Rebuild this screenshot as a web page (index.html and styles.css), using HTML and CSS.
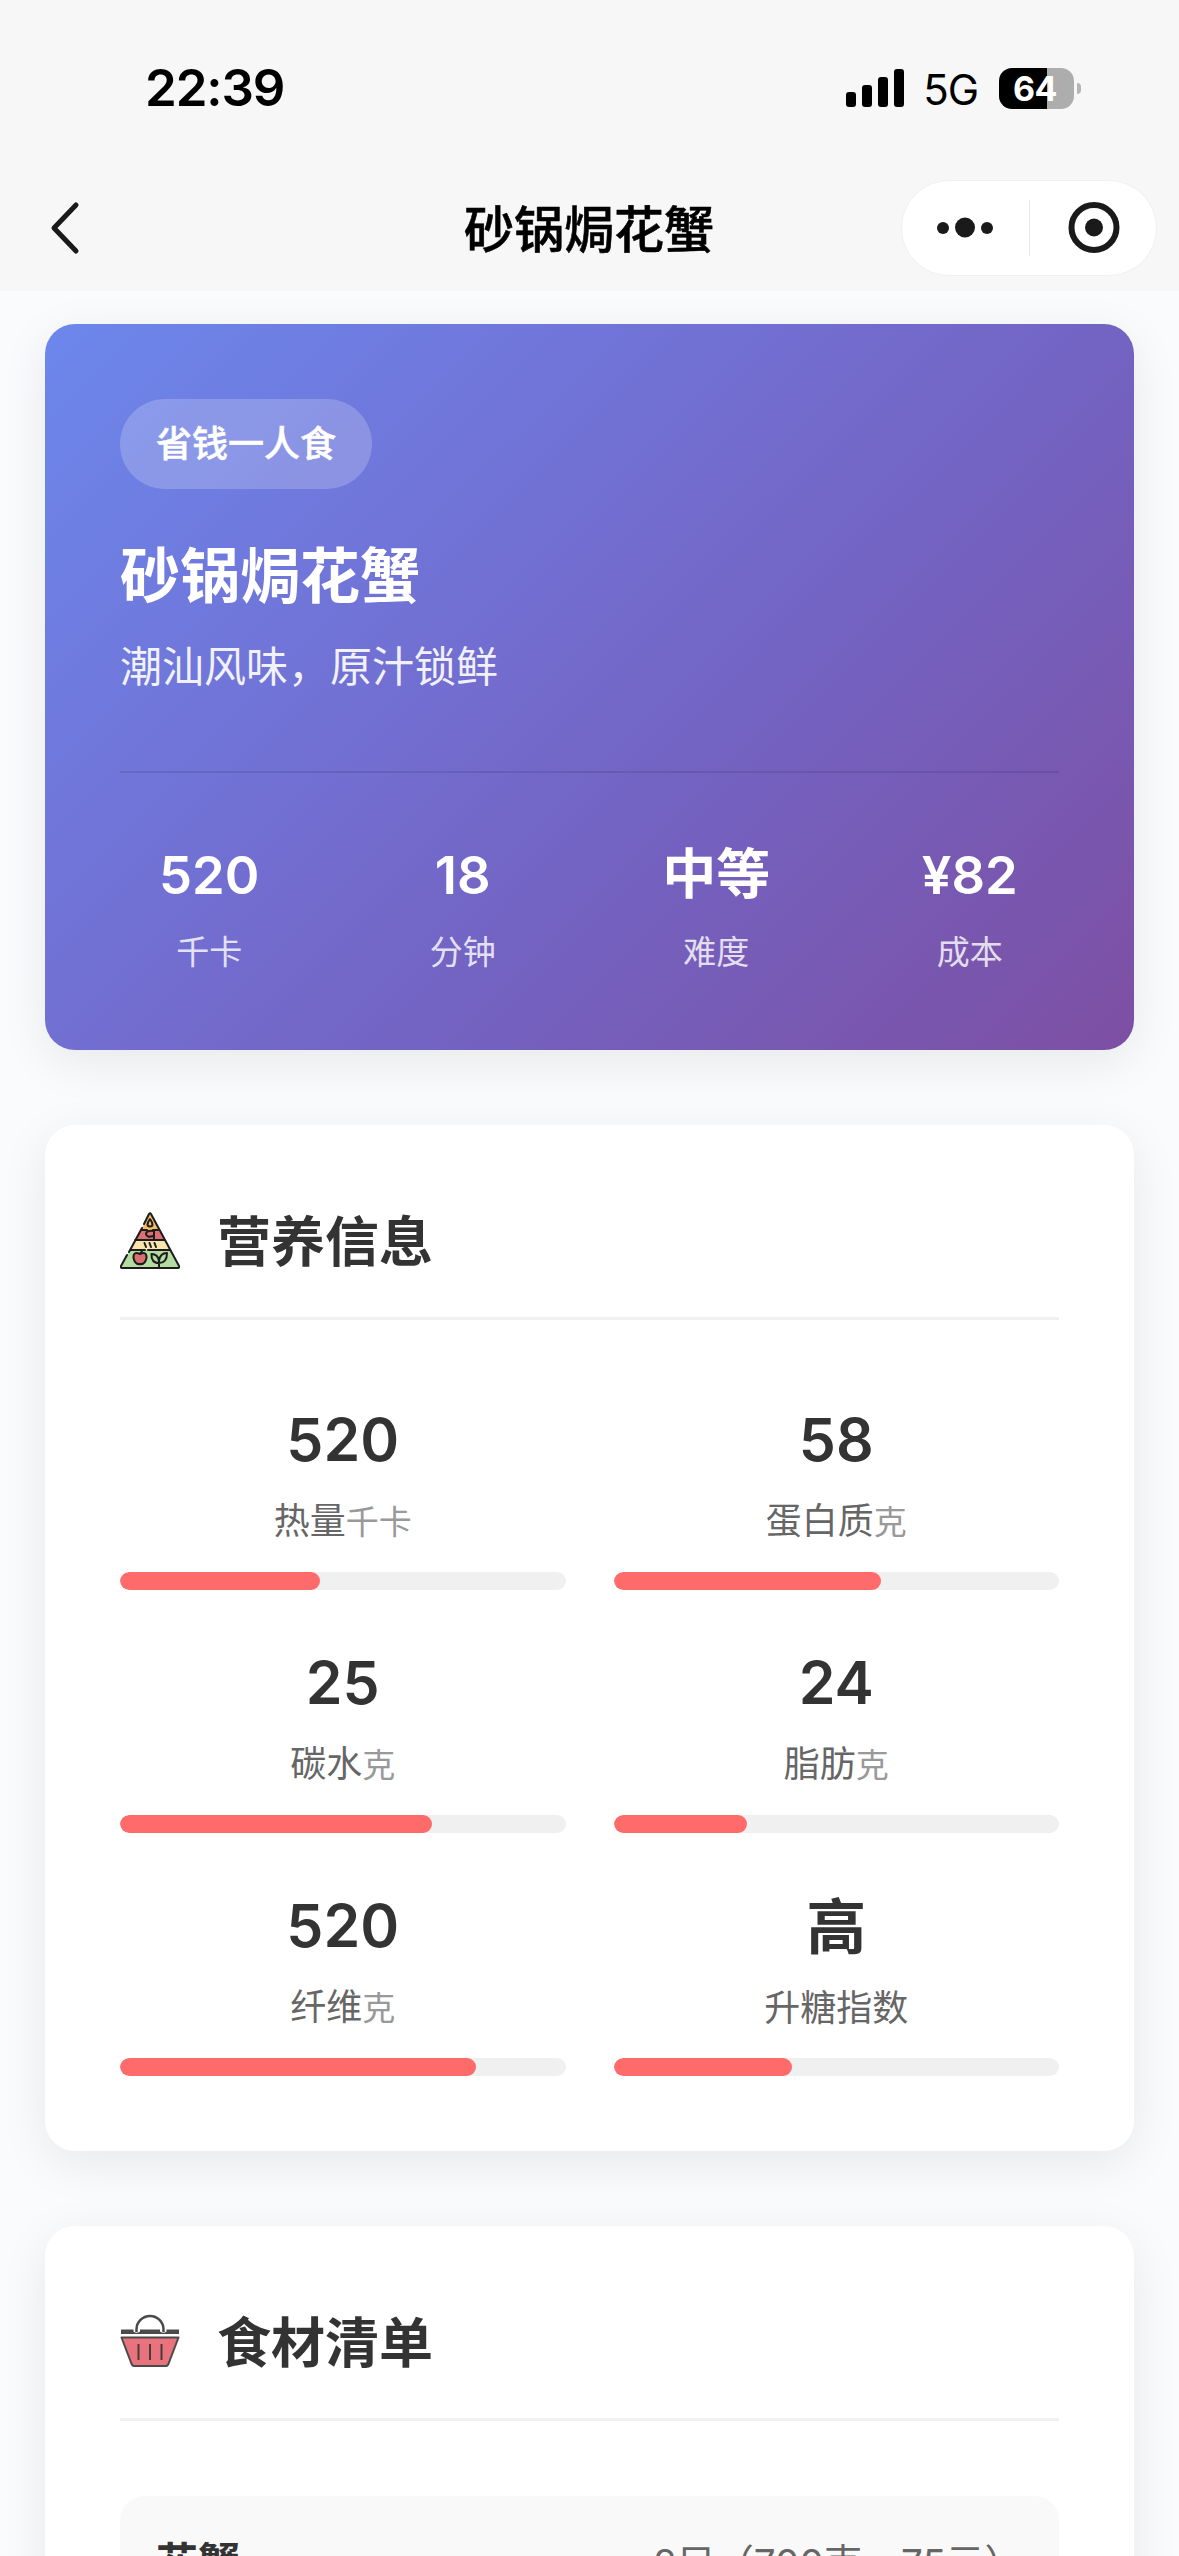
FILE: index.html
```html
<!DOCTYPE html>
<html lang="zh-CN">
<head>
<meta charset="utf-8">
<title>砂锅焗花蟹</title>
<link rel="stylesheet" href="styles.css">
</head>
<body>
<div class="screen">
  <header class="top">
    <div class="status">
      <span class="clock">22:39</span>
      <div class="status-right">
        <svg class="signal" width="58" height="38" viewBox="0 0 58 38"><rect x="0" y="23" width="10" height="15" rx="3"/><rect x="16" y="16" width="10" height="22" rx="3"/><rect x="32" y="8" width="10" height="30" rx="3"/><rect x="48" y="0" width="10" height="38" rx="3"/></svg>
        <span class="network">5G</span>
        <div class="battery"><span class="battery-body">64</span><span class="battery-tip"></span></div>
      </div>
    </div>
    <nav class="nav">
      <svg class="back" width="32" height="56" viewBox="0 0 32 56"><path d="M27 5L5 28L27 51"/></svg>
      <h1 class="nav-title">砂锅焗花蟹</h1>
      <div class="capsule">
        <svg width="127" height="56" viewBox="0 0 127 56"><circle cx="41" cy="28" r="6"/><circle cx="63" cy="27.500" r="10"/><circle cx="85" cy="28" r="6"/></svg>
        <span class="capsule-line"></span>
        <svg width="126" height="56" viewBox="0 0 126 56"><circle class="ring" cx="64" cy="27.500" r="22.500"/><circle cx="64" cy="27.500" r="9"/></svg>
      </div>
    </nav>
  </header>

  <main class="content">
    <section class="card hero">
      <span class="tag">省钱一人食</span>
      <h2 class="hero-title">砂锅焗花蟹</h2>
      <p class="hero-sub">潮汕风味，原汁锁鲜</p>
      <div class="stats">
        <div class="stat"><b>520</b><span>千卡</span></div>
        <div class="stat"><b>18</b><span>分钟</span></div>
        <div class="stat"><b class="han">中等</b><span>难度</span></div>
        <div class="stat"><b>¥82</b><span>成本</span></div>
      </div>
    </section>

    <section class="card nutrition">
      <div class="card-head">
        <svg class="icon" width="60" height="60" viewBox="0 0 60 60">
          <path fill="#f2bd63" d="M30 2L39 19H21Z"/><path fill="#dc6f73" d="M21 19H39L44.500 29H15.500Z"/><path fill="#fbe5ac" d="M15.500 29H44.500L50 39H10Z"/><path fill="#b5dca0" d="M10 39H50L59 57H1Z"/>
          <g fill="none" stroke="#1c1c1c" stroke-width="2" stroke-linecap="round" stroke-linejoin="round">
            <path d="M24 13L29 3Q30 1.500 31 3L59 55Q59.500 57 58 57H2Q.5 57 1 55L7 44M9 41L22 17M21 19H27M33 19H38M15 29H45M10 39H25M28 39H50"/>
            <path d="M30 8Q25 15 30 15.500Q35 15 30 8ZM34 28V20Q26 19 26 23Q27 27 33 25M24.500 32L26 36M29.500 32L31 36M34.500 32L36 36"/>
            <path fill="#d9706f" d="M20 43Q13 40 13.500 47Q15 54 20 53Q25 54 26.500 47Q27 40 20 43Z"/><path d="M20 43L22 40"/>
            <path d="M39 57V48M39 52Q31 52 31.500 43Q38 43 39 50Q40 42 47 42Q47 52 39 52"/>
          </g>
        </svg>
        <h3>营养信息</h3>
      </div>
      <div class="grid">
        <div class="item"><b>520</b><p>热量<small>千卡</small></p><div class="bar"><i style="width:45%"></i></div></div>
        <div class="item"><b>58</b><p>蛋白质<small>克</small></p><div class="bar"><i style="width:60%"></i></div></div>
        <div class="item"><b>25</b><p>碳水<small>克</small></p><div class="bar"><i style="width:70%"></i></div></div>
        <div class="item"><b>24</b><p>脂肪<small>克</small></p><div class="bar"><i style="width:30%"></i></div></div>
        <div class="item"><b>520</b><p>纤维<small>克</small></p><div class="bar"><i style="width:80%"></i></div></div>
        <div class="item"><b class="han">高</b><p>升糖指数</p><div class="bar"><i style="width:40%"></i></div></div>
      </div>
    </section>

    <section class="card">
      <div class="card-head">
        <svg class="icon" width="60" height="60" viewBox="0 0 60 60">
          <path fill="#4a4a4a" d="M1 17.500H59V22H1Z"/>
          <path fill="#fff" d="M13.500 17H20V19.500Q16.500 22 13.500 19.500ZM40 17H46.500V19.500Q43.500 22 40 19.500Z"/>
          <path fill="none" stroke="#4a4a4a" stroke-width="2.500" d="M16.500 20V17.500A13.500 13.500 0 0 1 43.500 17.500V20"/>
          <path fill="#e9737c" stroke="#4a4a4a" stroke-width="2" stroke-linejoin="round" d="M1.500 25.500H58.500L49 50.500Q48 54 46 54H14Q12 54 11 50.500Z"/>
          <path stroke="#4a3a3a" stroke-width="2" d="M18.500 32V48M30 32V48M41.500 32V48"/>
        </svg>
        <h3>食材清单</h3>
      </div>
      <div class="food"><b>花蟹</b><span>2只（700克，75元）</span></div>
    </section>
  </main>
</div>
</body>
</html>
```
FILE: styles.css
```css
* { box-sizing: border-box; margin: 0; padding: 0; }
body { background: #fafbfd; font-family: Inter, "Noto Sans CJK SC", sans-serif; color: #333; }
.screen { width: 1179px; height: 2556px; overflow: hidden; }

.top { height: 291px; background: #f7f7f7; padding-top: 60px; }
.status { height: 56px; padding: 0 98px 0 145px; display: flex; align-items: center; justify-content: space-between; color: #000; }
.clock { font-size: 51px; font-weight: 600; line-height: 56px; letter-spacing: -1.1px; }
.status-right { display: flex; align-items: center; }
.network { font-size: 42px; line-height: 56px; font-weight: 400; margin: 3px 21px 0 19px; letter-spacing: -1px; }
.battery { display: flex; align-items: center; gap: 3px; }
.battery-body { width: 75px; height: 41px; border-radius: 13px; background: linear-gradient(90deg, #000 64%, #adadad 64%); color: #fff; font-size: 34px; line-height: 41px; font-weight: 700; text-align: center; padding-right: 3px; letter-spacing: -0.5px; }
.battery-tip { width: 4px; height: 11px; border-radius: 0 5px 5px 0; background: #b5b5b5; }

.nav { margin-top: 64px; height: 96px; padding: 0 22px 0 49px; display: grid; grid-template-columns: 255px 1fr 256px; align-items: center; }
.back { fill: none; stroke: #1a1a1a; stroke-width: 5; stroke-linecap: round; stroke-linejoin: round; }
.nav-title { font-size: 50px; line-height: 60px; font-weight: 500; color: #000; text-align: center; padding: 4px 27px 0 0; white-space: nowrap; -webkit-text-stroke: 0.6px currentColor; }
.capsule { height: 96px; border: 1px solid #f0f0f0; border-radius: 48px; background: #fff; display: flex; align-items: center; fill: #1a1a1a; }
.capsule-line { width: 1px; height: 56px; background: #e8e8e8; }
.capsule .ring { fill: none; stroke: #1a1a1a; stroke-width: 6; }

.content { padding: 33px 45px 0; display: flex; flex-direction: column; gap: 75px; }
.card { padding: 75px; border-radius: 30px; background: #fff; box-shadow: 0 12px 48px rgba(0, 0, 0, .08); }
.hero { height: 726px; color: #fff; background: linear-gradient(135deg, #6c87ec 0%, #726fd2 40%, #7363c2 60%, #7d4fa3 100%); display: flex; flex-direction: column; align-items: flex-start; }
.tag { height: 90px; padding: 0 36px; border-radius: 45px; background: rgba(255, 255, 255, .2); font-size: 36px; line-height: 90px; font-weight: 500; -webkit-text-stroke: 0.5px currentColor; }
.hero-title { margin-top: 51px; font-size: 60px; line-height: 72px; font-weight: 700; }
.hero-sub { margin-top: 23px; font-size: 42px; line-height: 63px; opacity: .9; }
.stats { width: 100%; margin-top: 73px; padding-top: 63px; border-top: 2px solid rgba(0, 0, 0, .1); display: grid; grid-template-columns: repeat(4, 1fr); column-gap: 75px; }
.stat { display: flex; flex-direction: column; align-items: center; }
.stat b { font-size: 52.5px; line-height: 78px; height: 78px; font-weight: 600; }
.stat .han { font-size: 54px; font-weight: 700; }
.stat span { margin-top: 14px; font-size: 33px; line-height: 48px; opacity: .8; }

.card-head { height: 120px; border-bottom: 3px solid #f0f0f0; display: flex; align-items: flex-start; gap: 37px; padding-top: 11px; margin-bottom: 75px; }
.card-head h3 { font-size: 54px; line-height: 64px; font-weight: 700; }
.grid { display: grid; grid-template-columns: 1fr 1fr; column-gap: 48px; row-gap: 48px; }
.item { height: 195px; display: flex; flex-direction: column; align-items: center; justify-content: flex-end; }
.item b { font-size: 59px; line-height: 80px; height: 80px; font-weight: 600; }
.item .han { font-size: 60px; font-weight: 700; }
.item p { font-size: 36px; line-height: 50px; color: #666; margin: 16px 0 25px; }
.item small { font-size: 33px; color: #999; }
.bar { width: 100%; height: 18px; border-radius: 9px; background: #f0f0f0; overflow: hidden; }
.bar i { display: block; height: 100%; border-radius: 9px; background: #ff6b6b; }

.food { height: 130px; padding: 39px 36px; border-radius: 24px; background: #f9f9f9; display: flex; justify-content: space-between; font-size: 42px; line-height: 56px; }
.food span { font-size: 38.6px; color: #666; }
```
